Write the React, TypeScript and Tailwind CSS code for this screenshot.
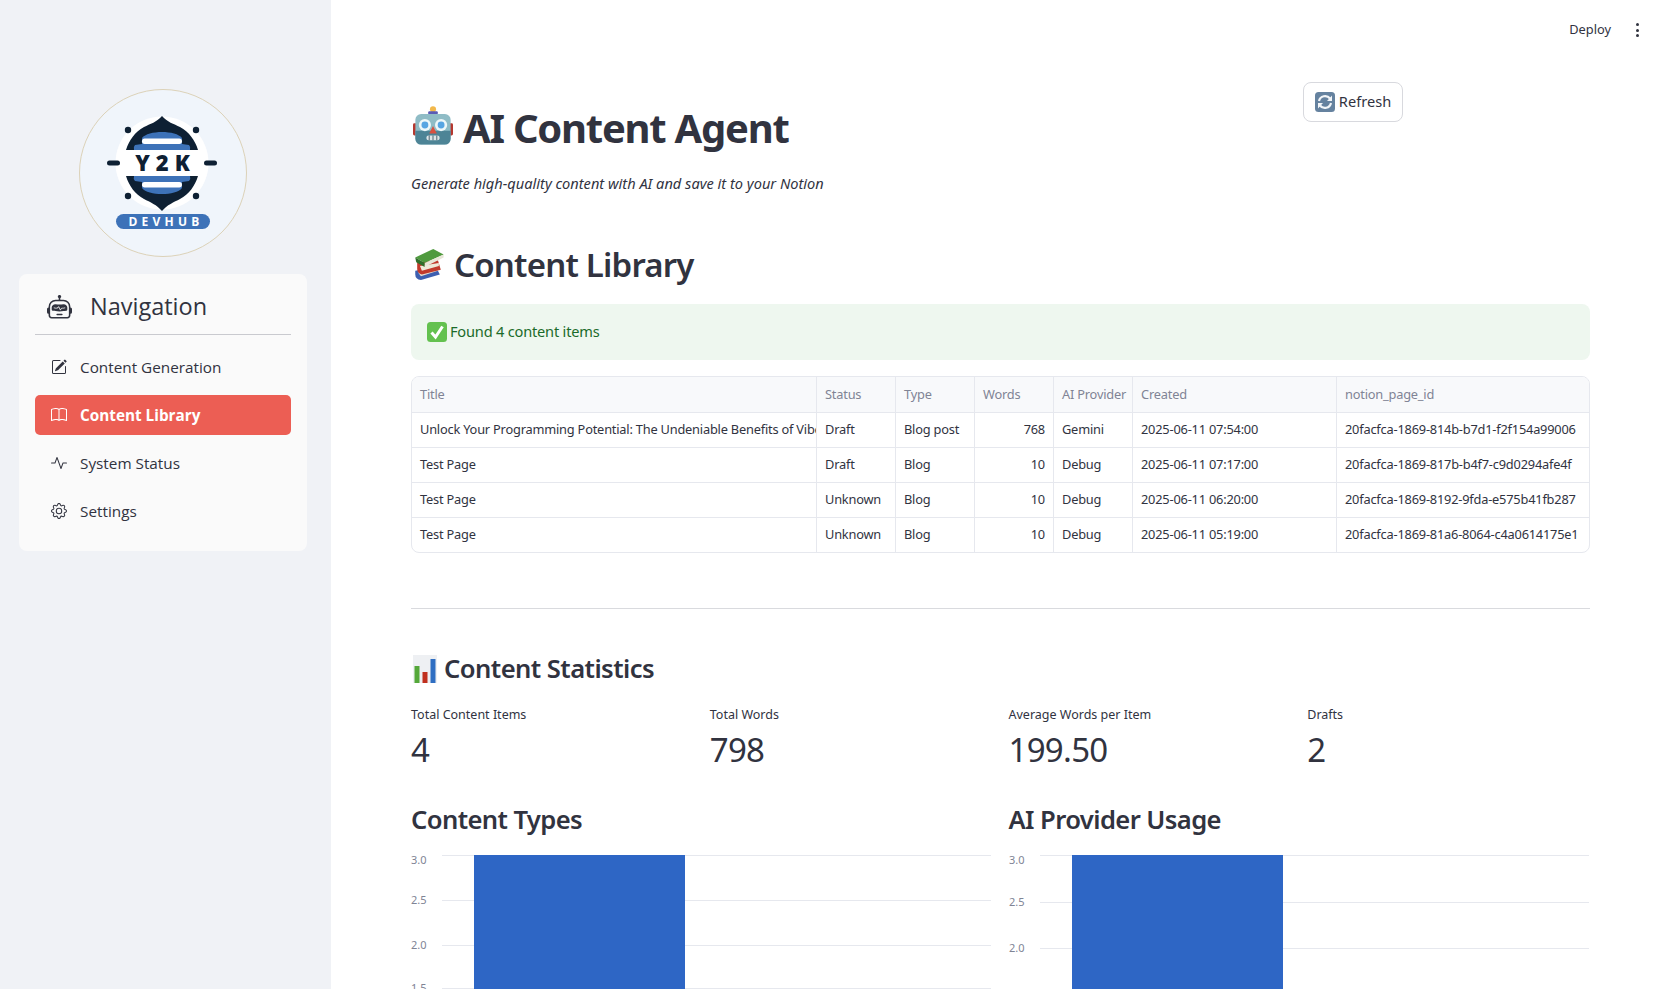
import React from 'react';
import { BsActivity, BsBook, BsGear, BsPencilSquare, BsRobot } from 'react-icons/bs';

const rows = [
  ['Unlock Your Programming Potential: The Undeniable Benefits of Vibe Coding', 'Draft', 'Blog post', '768', 'Gemini', '2025-06-11 07:54:00', '20facfca-1869-814b-b7d1-f2f154a99006'],
  ['Test Page', 'Draft', 'Blog', '10', 'Debug', '2025-06-11 07:17:00', '20facfca-1869-817b-b4f7-c9d0294afe4f'],
  ['Test Page', 'Unknown', 'Blog', '10', 'Debug', '2025-06-11 06:20:00', '20facfca-1869-8192-9fda-e575b41fb287'],
  ['Test Page', 'Unknown', 'Blog', '10', 'Debug', '2025-06-11 05:19:00', '20facfca-1869-81a6-8064-c4a0614175e1'],
];
const headers = ['Title', 'Status', 'Type', 'Words', 'AI Provider', 'Created', 'notion_page_id'];
const metrics = [
  ['Total Content Items', '4'],
  ['Total Words', '798'],
  ['Average Words per Item', '199.50'],
  ['Drafts', '2'],
];
const navItems = [
  { label: 'Content Generation', Icon: BsPencilSquare },
  { label: 'Content Library', Icon: BsBook, active: true },
  { label: 'System Status', Icon: BsActivity },
  { label: 'Settings', Icon: BsGear },
];

function Logo() {
  return (
    <svg width="190" height="190" viewBox="0 0 190 190">
      <circle cx="93" cy="93" r="83.5" fill="#f0f5fb" stroke="#dcd2b8" strokeWidth="1" />
      <circle cx="92" cy="83" r="46.5" fill="#ffffff" />
      <path d="M92 36 C97 42 104 44 110 47 C119 52 125 60 128 70 L56 70 C59 60 65 52 74 47 C80 44 87 42 92 36 Z" fill="#0e2033" />
      <path d="M92 131 C97 125 104 122 110 119 C119 114 125 106 128 96 L56 96 C59 106 65 114 74 119 C80 122 87 125 92 131 Z" fill="#0e2033" />
      <path d="M72 58 C78 50 106 50 112 58 L112 64 L119 65 Q121 67 120 70 L64 70 Q63 67 65 65 L72 64 Z" fill="#3d72b8" />
      <path d="M64 96 L120 96 Q121 99 119 101 L112 102 L112 108 C106 116 78 116 72 108 L72 102 L65 101 Q63 99 64 96 Z" fill="#3d72b8" />
      <rect x="72" y="58.5" width="40" height="5.5" rx="2.7" fill="#ffffff" />
      <rect x="72" y="102" width="40" height="5.5" rx="2.7" fill="#ffffff" />
      <circle cx="58" cy="50" r="3.2" fill="#0e2033" />
      <circle cx="126" cy="50" r="3.2" fill="#0e2033" />
      <circle cx="58" cy="116" r="3.2" fill="#0e2033" />
      <circle cx="126" cy="116" r="3.2" fill="#0e2033" />
      <rect x="37" y="80.5" width="13" height="5" rx="2.5" fill="#0e2033" />
      <rect x="134" y="80.5" width="13" height="5" rx="2.5" fill="#0e2033" />
      <text x="95.5" y="91" textAnchor="middle" fontFamily="'Open Sans', sans-serif" fontWeight="800" fontSize="22" letterSpacing="6" fill="#0e2033">Y2K</text>
      <rect x="46" y="134" width="94" height="15" rx="7.5" fill="#3d72b8" />
      <text x="96" y="146" textAnchor="middle" fontFamily="'Open Sans', sans-serif" fontWeight="700" fontSize="12" letterSpacing="4.2" fill="#ffffff">DEVHUB</text>
    </svg>
  );
}

function RobotEmoji() {
  return (
    <svg width="40" height="42" viewBox="0 0 42 42" className="-mt-[4px] shrink-0">
      <rect x="0" y="18" width="4" height="13" rx="1.5" fill="#b5382f" />
      <rect x="38" y="18" width="4" height="13" rx="1.5" fill="#b5382f" />
      <circle cx="21" cy="3.5" r="3.2" fill="#f2b84b" />
      <rect x="16" y="5.5" width="10" height="4" rx="1" fill="#5a5bb5" />
      <rect x="2.5" y="8.5" width="37" height="32" rx="6" fill="#8fbcc6" />
      <path d="M2.5 26 H39.5 V34.5 a6 6 0 0 1 -6 6 H8.5 a6 6 0 0 1 -6 -6 Z" fill="#4d8496" />
      <circle cx="12.5" cy="20" r="6.4" fill="#eef7f9" />
      <circle cx="29.5" cy="20" r="6.4" fill="#eef7f9" />
      <circle cx="12.5" cy="20" r="3.6" fill="#58a5e2" />
      <circle cx="29.5" cy="20" r="3.6" fill="#58a5e2" />
      <path d="M21 21 L25 29 H17 Z" fill="#d9503f" />
      <rect x="14" y="31" width="14" height="5" rx="2.5" fill="#dbe5e8" />
      <path d="M17 31 V36 M21 31 V36 M25 31 V36" stroke="#48606a" strokeWidth="1" />
    </svg>
  );
}

function BooksEmoji() {
  return (
    <svg width="33" height="34" viewBox="0 0 34 36" className="shrink-0">
      <path d="M3 24 L25 20 L29 28 L9 34 Q3 33 3 28 Z" fill="#3d5fb0" />
      <path d="M6 26 L27 21 L27 24 L9 30 Z" fill="#e6e2d4" />
      <path d="M5 15 L27 13 L30 23 L10 28 Q5 27 5 22 Z" fill="#c23a2c" />
      <path d="M8 19 L28 16 L28 19 L10 24 Z" fill="#efe9d8" />
      <path d="M3 10 L22 1 L33 7 L13 16 Z" fill="#4f9a3e" />
      <path d="M3 10 L13 16 L13 20 L4 15 Z" fill="#2e6e2a" />
      <path d="M13 16 L33 7 L33 10 L13 20 Z" fill="#e8e6d8" />
    </svg>
  );
}

function CheckEmoji() {
  return (
    <svg width="20" height="20" viewBox="0 0 20 20" className="shrink-0">
      <rect x="0" y="0" width="20" height="20" rx="3.5" fill="#63c14f" />
      <path d="M4.5 10.5 L8.5 15 L15.5 4.5" fill="none" stroke="#ffffff" strokeWidth="3" />
    </svg>
  );
}

function RefreshEmoji() {
  return (
    <svg width="20" height="20" viewBox="0 0 20 20" className="shrink-0">
      <rect x="0" y="0" width="20" height="20" rx="3.5" fill="#65829f" />
      <path d="M4 9 A6.2 6.2 0 0 1 15 6.5 M16 11 A6.2 6.2 0 0 1 5 13.5" fill="none" stroke="#f2f5f8" strokeWidth="2.2" />
      <path d="M17 3.5 V9 H12 Z M3 16.5 V11 H8 Z" fill="#f2f5f8" />
    </svg>
  );
}

function ChartEmoji() {
  return (
    <svg width="24" height="28" viewBox="0 0 24 28" className="shrink-0">
      <rect x="0" y="0" width="24" height="28" fill="#eef0f3" />
      <rect x="1.5" y="11" width="5" height="17" fill="#55a83a" />
      <rect x="9.5" y="17" width="5" height="11" fill="#c0301f" />
      <rect x="17.5" y="4" width="5" height="24" fill="#2f6ec2" />
    </svg>
  );
}

function BarChart({ ticks, barX }: { ticks: [string, number][]; barX: number }) {
  return (
    <svg width="580" height="136" viewBox="0 0 580 136" className="block overflow-visible">
      {ticks.map(([label, y]) => (
        <g key={label}>
          <line x1="31" x2="580" y1={y + 0.5} y2={y + 0.5} stroke="#e6e8ee" />
          {/* top tick label sits below its line, the rest are centred on it */}
          <text x="0" y={y === 0 ? 9 : y + 4} fontSize="11" fill="#808495" fontFamily="'Noto Sans', sans-serif">{label}</text>
        </g>
      ))}
      <rect x={barX} y="0" width="211" height="136" fill="#2e66c5" />
    </svg>
  );
}

export default function App() {
  return (
    <div className="flex h-[989px] w-[1668px] overflow-hidden bg-white font-['Noto_Sans',sans-serif] text-[#31333f]">
      {/* Sidebar */}
      <aside className="flex w-[331px] shrink-0 flex-col bg-[#f0f2f6] px-[19px]">
        <div className="mt-[80px] ml-[51px] h-[194px]">
          <Logo />
        </div>
        <div className="w-[288px] rounded-lg bg-[#fafafa] px-4 pb-[20px] pt-[15px] font-['Open_Sans',sans-serif]">
          <div className="flex h-[46px] items-center border-b border-[#c9cacf] pb-[9px]">
            <BsRobot size={25} className="ml-3 mr-[18px] text-[#31333f]" />
            <span className="text-[23.5px] font-normal leading-none">Navigation</span>
          </div>
          <nav className="mt-[12px] flex flex-col gap-2">
            {navItems.map(({ label, Icon, active }) => (
              <div
                key={label}
                className={
                  active
                    ? 'flex h-10 items-center rounded-[5px] bg-[#ec5e54] pl-4 text-white'
                    : 'flex h-10 items-center rounded-[5px] pl-4 text-[#31333f]'
                }
              >
                <Icon size={16} className="mr-[13px] shrink-0" />
                <span className={active ? 'text-[15.3px] font-bold' : 'text-[15.3px]'}>{label}</span>
              </div>
            ))}
          </nav>
        </div>
      </aside>

      {/* Main */}
      <main className="min-w-0 flex-1">
        <div className="flex h-[60px] items-center justify-end pr-[28px]">
          <span className="text-[12.8px]">Deploy</span>
          <div className="ml-[25px] flex h-[14px] w-1 flex-col justify-between">
            <span className="h-[3px] w-[3px] rounded-full bg-[#31333f]" />
            <span className="h-[3px] w-[3px] rounded-full bg-[#31333f]" />
            <span className="h-[3px] w-[3px] rounded-full bg-[#31333f]" />
          </div>
        </div>

        <div className="pl-[80px] pr-[78px]">
          <div className="relative h-[88px]">
            <div className="flex items-center gap-[10px] pl-[2px] pt-[40px]">
              <RobotEmoji />
              <h1 className="text-[40px] font-bold leading-[56px] tracking-[-1.25px]">AI Content Agent</h1>
            </div>
            <button className="absolute right-[187px] top-[22px] flex h-10 w-[100px] items-center justify-center gap-1 rounded-lg border border-[#d8d9de] bg-white text-[14.6px]">
              <RefreshEmoji />
              Refresh
            </button>
          </div>

          <p className="mt-[23px] text-[14.6px] italic leading-[24px]">Generate high-quality content with AI and save it to your Notion</p>

          <div className="mt-[47px] flex items-center gap-[9px] pl-[1px]">
            <BooksEmoji />
            <h2 className="text-[33px] font-semibold leading-[46px] tracking-[-0.8px]">Content Library</h2>
          </div>

          <div className="mt-[16px] flex h-[56px] items-center gap-[3px] rounded-lg bg-[#eef7ef] pl-[16px] text-[14.6px] tracking-[-0.2px] text-[#1b6b2a]">
            <CheckEmoji />
            Found 4 content items
          </div>

          {/* Table */}
          <div className="mt-[16px] overflow-hidden rounded-lg border border-[#e6e8ee] text-[12.8px] tracking-[-0.2px]">
            <div className="grid h-[35px] grid-cols-[405px_79px_79px_79px_79px_204px_1fr] bg-[#f8f9fb] text-[#808495]">
              {headers.map((h) => (
                <div key={h} className="flex items-center whitespace-nowrap border-r border-[#e6e8ee] px-2 last:border-r-0">
                  {h}
                </div>
              ))}
            </div>
            {rows.map((row, i) => (
              <div key={i} className="grid h-[35px] grid-cols-[405px_79px_79px_79px_79px_204px_1fr] border-t border-[#e6e8ee]">
                {row.map((cell, j) => (
                  <div
                    key={j}
                    className={
                      j === 3
                        ? 'flex items-center justify-end overflow-hidden whitespace-nowrap border-r border-[#e6e8ee] px-2'
                        : 'flex items-center overflow-hidden whitespace-nowrap border-r border-[#e6e8ee] px-2 last:border-r-0'
                    }
                  >
                    {cell}
                  </div>
                ))}
              </div>
            ))}
          </div>

          <hr className="mt-[55px] border-t border-[#d9dade]" />

          <div className="mt-[42px] flex items-center gap-[7px] pl-[2px]">
            <ChartEmoji />
            <h3 className="text-[25.6px] font-semibold leading-[36px] tracking-[-0.55px]">Content Statistics</h3>
          </div>

          <div className="mt-[17px] grid grid-cols-4 gap-4">
            {metrics.map(([label, value]) => (
              <div key={label}>
                <div className="text-[12.5px] leading-[22px]">{label}</div>
                <div className="mt-[1px] text-[33px] leading-[46px] tracking-[-0.7px]">{value}</div>
              </div>
            ))}
          </div>

          <div className="mt-[29px] grid grid-cols-2 gap-4">
            <div>
              <h3 className="text-[25.6px] font-semibold leading-[36px] tracking-[-0.6px]">Content Types</h3>
              <div className="mt-[17px]">
                <BarChart ticks={[['3.0', 0], ['2.5', 45], ['2.0', 90], ['1.5', 133]]} barX={63} />
              </div>
            </div>
            <div>
              <h3 className="text-[25.6px] font-semibold leading-[36px] tracking-[-0.6px]">AI Provider Usage</h3>
              <div className="mt-[17px]">
                <BarChart ticks={[['3.0', 0], ['2.5', 47], ['2.0', 93]]} barX={63} />
              </div>
            </div>
          </div>
        </div>
      </main>
    </div>
  );
}
